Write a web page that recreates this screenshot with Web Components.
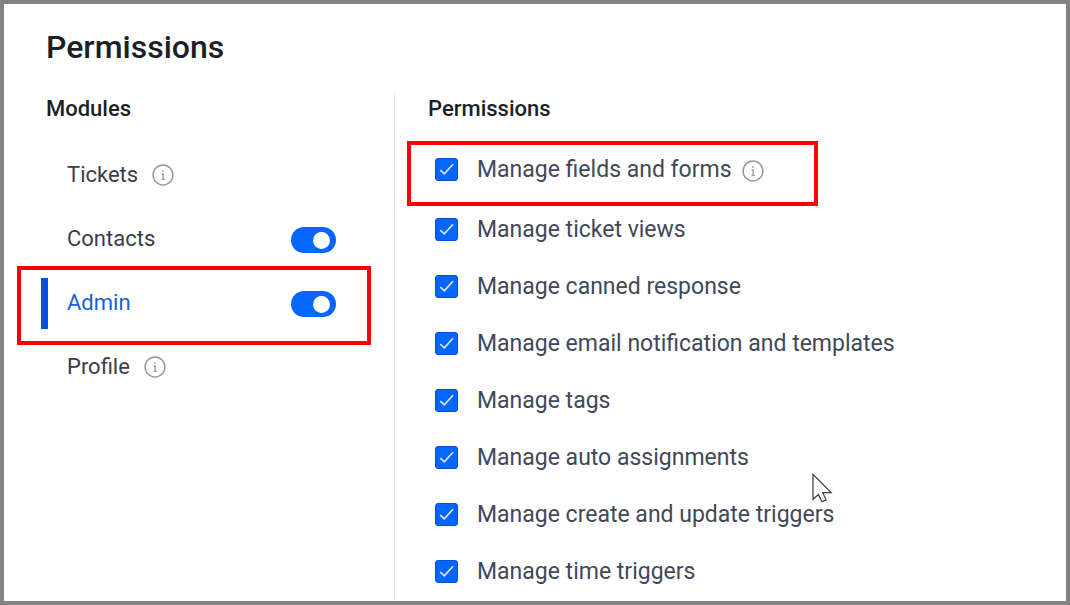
<!DOCTYPE html>
<html lang="en">
<head>
<meta charset="utf-8">
<meta name="viewport" content="width=device-width, initial-scale=1">
<title>Permissions</title>
<style>
  body { margin: 0; background: #fff; color: #1b1f27; font-family: Roboto, "Liberation Sans", sans-serif; }
</style>
</head>
<body>
<role-page>
  <span slot="title">Permissions</span>
  <module-list slot="modules" heading="Modules">
    <module-item info>Tickets</module-item>
    <module-item toggle>Contacts</module-item>
    <module-item toggle active marked>Admin</module-item>
    <module-item info>Profile</module-item>
  </module-list>
  <permission-list slot="permissions" heading="Permissions">
    <permission-item info marked>Manage fields and forms</permission-item>
    <permission-item>Manage ticket views</permission-item>
    <permission-item>Manage canned response</permission-item>
    <permission-item>Manage email notification and templates</permission-item>
    <permission-item>Manage tags</permission-item>
    <permission-item>Manage auto assignments</permission-item>
    <permission-item>Manage create and update triggers</permission-item>
    <permission-item>Manage time triggers</permission-item>
  </permission-list>
  <mouse-pointer slot="pointer"></mouse-pointer>
</role-page>

<script>
const define = (name, render) => customElements.define(name, class extends HTMLElement {
  constructor() {
    super();
    this.attachShadow({ mode: "open" });
  }
  connectedCallback() {
    this.shadowRoot.innerHTML = render(this);
  }
});

define("info-icon", () => `
  <style>
    :host { display: block; width: 22px; height: 22px; flex: none; }
    svg { display: block; }
  </style>
  <svg width="22" height="22" viewBox="0 0 22 22" fill="none" stroke="#999" aria-hidden="true">
    <circle cx="11" cy="11" r="9.9" stroke-width="1.5"/>
    <path d="M11 6.2v1.7M9.6 10h1.5v5.4M9.5 15.4h3.2" stroke-width="1.3"/>
  </svg>`);

define("toggle-switch", el => `
  <style>
    :host { display: block; flex: none; }
    input {
      appearance: none; display: flex; align-items: center; justify-content: flex-end;
      box-sizing: border-box; width: 45px; height: 26px; margin: 0; padding: 0 6px;
      border-radius: 13px; background: #0565ff; cursor: pointer;
    }
    input::before { content: ""; width: 17px; height: 17px; border-radius: 50%; background: #fff; }
    input:not(:checked) { justify-content: flex-start; background: #a5adba; }
  </style>
  <input type="checkbox" role="switch" aria-label="${el.getAttribute("label")}" checked>`);

define("check-box", () => `
  <style>
    :host { display: block; }
    label { display: flex; align-items: center; gap: 19px; cursor: pointer; }
    .box { display: grid; flex: none; }
    input, svg { grid-area: 1 / 1; }
    input {
      appearance: none; box-sizing: border-box; width: 23px; height: 23px; margin: 0;
      border: 1px solid #0551d6; border-radius: 3px; background: #fff;
    }
    input:checked { background: #0565ff; }
    svg { pointer-events: none; }
  </style>
  <label>
    <span class="box">
      <input type="checkbox" checked>
      <svg width="23" height="23" viewBox="0 0 23 23" fill="none" stroke="#dfeaff" stroke-width="1.6" aria-hidden="true">
        <path d="M5.3 12.2l4 3.6 8.7-9.6"/>
      </svg>
    </span>
    <slot></slot>
  </label>`);

define("module-item", el => `
  <style>
    :host { display: block; position: relative; }
    .row { display: flex; align-items: center; height: 64px; padding: 0 58px 0 63px; }
    a { color: #3a3e47; text-decoration: none; margin-right: 14px; }
    toggle-switch { margin-left: auto; padding-top: 2px; }
    :host([active]) a { color: #1a5fdc; }
    :host([active]) .row::before {
      content: ""; width: 7px; height: 51px; margin: 0 19px 0 -26px; background: #0450d4;
    }
    :host([marked])::after {
      content: ""; position: absolute; inset: -5px 23px -10px 13px; border: 4px solid #fe0000; pointer-events: none;
    }
  </style>
  <div class="row">
    <a href="#${el.textContent.toLowerCase()}"><slot></slot></a>
    ${el.hasAttribute("info") ? "<info-icon></info-icon>" : ""}
    ${el.hasAttribute("toggle") ? `<toggle-switch label="${el.textContent}"></toggle-switch>` : ""}
  </div>`);

define("module-list", el => `
  <style>
    :host { display: block; font-size: 22px; line-height: 32px; }
    h2 { margin: 0; padding-left: 42px; font-size: 22px; font-weight: 500; }
    nav { padding-top: 18px; }
  </style>
  <h2>${el.getAttribute("heading")}</h2>
  <nav aria-label="${el.getAttribute("heading")}"><slot></slot></nav>`);

define("permission-item", el => `
  <style>
    :host { display: flex; align-items: center; position: relative; width: fit-content; height: 57px; color: #414858; }
    info-icon { margin-left: 10px; padding-top: 2px; }
    :host([marked]) { height: 63px; }
    :host([marked])::after {
      content: ""; position: absolute; inset: 3px -54px -5px -28px; border: 4px solid #fe0000; pointer-events: none;
    }
  </style>
  <check-box>${el.textContent}</check-box>
  ${el.hasAttribute("info") ? "<info-icon></info-icon>" : ""}`);

define("permission-list", el => `
  <style>
    :host { display: block; font-size: 23px; line-height: 32px; }
    h2 { margin: 0; padding-left: 33px; font-size: 22px; font-weight: 500; }
    .items { padding: 13px 0 0 40px; }
  </style>
  <h2>${el.getAttribute("heading")}</h2>
  <div class="items" role="group" aria-label="${el.getAttribute("heading")}"><slot></slot></div>`);

define("mouse-pointer", () => `
  <style>
    :host { display: block; position: absolute; left: 811px; top: 472px; pointer-events: none; }
    svg { display: block; }
  </style>
  <svg width="22" height="32" viewBox="0 0 22 32" fill="#fff" stroke="#3c3c44" stroke-width="1.2" aria-hidden="true">
    <path d="M2 2.3v25l5.4-4.8 3.6 7.2 4.2-1.8-3.4-7.2h8.3z"/>
  </svg>`);

define("role-page", () => `
  <style>
    :host {
      display: flex; flex-direction: column; box-sizing: border-box; min-height: 100vh;
      border: 4px solid #828282; background: #fff;
    }
    h1 { margin: 0; padding: 23px 42px 0; font-size: 32px; line-height: 40px; font-weight: 500; }
    .columns { flex: 1; display: grid; grid-template-columns: 390px 1fr; margin-top: 26px; }
    .permissions { border-left: 1px solid #e6e8f0; }
  </style>
  <h1><slot name="title"></slot></h1>
  <div class="columns">
    <section><slot name="modules"></slot></section>
    <section class="permissions"><slot name="permissions"></slot></section>
  </div>
  <slot name="pointer"></slot>`);
</script>
</body>
</html>
